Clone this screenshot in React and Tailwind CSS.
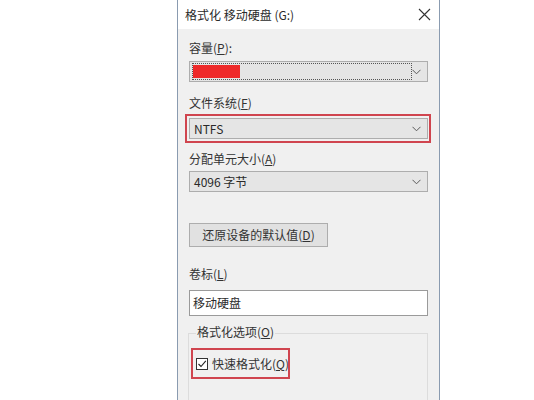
import React from "react";

const font = { fontFamily: '"Noto Sans CJK SC", "Noto Sans", sans-serif' };

function Chevron() {
  return (
    <svg width="9" height="6" viewBox="0 0 9 6" className="shrink-0">
      <path d="M0.5 0.8 L4.5 4.8 L8.5 0.8" fill="none" stroke="#5a5a5a" strokeWidth="1" />
    </svg>
  );
}

function Combo({ children, className = "" }) {
  return (
    <div className={"h-[21px] w-[239px] flex items-center justify-between bg-[#e5e5e5] border border-[#adadad] pl-[4px] pr-[6px] " + className}>
      <div className="flex-1 flex items-center text-[12px] leading-[16px] text-[#2a2a2a]">{children}</div>
      <Chevron />
    </div>
  );
}

export default function App() {
  return (
    <div className="w-[534px] h-[400px] bg-white overflow-hidden" style={font}>
      <div className="ml-[177px] w-[263px] h-[400px] border-x border-[#8a9bb0] bg-[#f0f0f0] flex flex-col overflow-hidden">
        <div className="h-[29px] shrink-0 bg-white flex items-center justify-between pl-[7px] pr-[8px]">
          <span className="text-[12px] leading-[16px] text-[#2a2a2a]">格式化 移动硬盘 (G:)</span>
          <svg width="13" height="13" viewBox="0 0 13 13">
            <path d="M1 1 L12 12 M12 1 L1 12" stroke="#333" strokeWidth="1.1" />
          </svg>
        </div>
        <div className="pl-[11px] flex flex-col shrink-0">
          <div className="mt-[11px] h-[16px] text-[12px] leading-[16px] text-[#333]">
            容量(<span className="underline">P</span>):
          </div>
          <Combo className="mt-[5px]">
            <div className="h-[17px] w-[220px] border border-dotted border-[#555] flex items-center -ml-[2px]">
              <div className="h-[13px] w-[47px] bg-[#ee2a2a]" />
            </div>
          </Combo>
          <div className="mt-[13px] h-[16px] text-[12px] leading-[16px] text-[#333]">
            文件系统(<span className="underline">F</span>)
          </div>
          <div className="relative mt-[7px]">
            <Combo>NTFS</Combo>
            <div className="absolute -left-[4px] -top-[4px] w-[246px] h-[29px] border-[2.5px] border-[#d0454f]" />
          </div>
          <div className="mt-[12px] h-[16px] text-[12px] leading-[16px] text-[#333]">
            分配单元大小(<span className="underline">A</span>)
          </div>
          <Combo className="mt-[4px]">4096 字节</Combo>
          <div className="mt-[31px] h-[24px] w-[139px] bg-[#e1e1e1] border border-[#adadad] flex items-center justify-center text-[12px] leading-[16px] text-[#333]">
            还原设备的默认值(<span className="underline">D</span>)
          </div>
          <div className="mt-[19px] h-[16px] text-[12px] leading-[16px] text-[#333]">
            卷标(<span className="underline">L</span>)
          </div>
          <div className="mt-[8px] h-[26px] w-[239px] bg-white border border-[#9a9a9a] flex items-center pl-[3px] text-[12px] leading-[16px] text-[#2a2a2a]">
            移动硬盘
          </div>
          <div className="relative w-[240px] h-[80px] border border-[#dcdcdc] -ml-[1px] mt-[17px]">
            <div className="absolute -top-[10px] left-[7px] px-[1px] bg-[#f0f0f0] text-[12px] leading-[16px] text-[#333]">
              格式化选项(<span className="underline">O</span>)
            </div>
            <div className="relative mt-[22px] ml-[7px] flex items-center gap-[4px] h-[16px]">
              <div className="w-[12px] h-[12px] bg-white border border-[#333] flex items-center justify-center">
                <svg width="10" height="10" viewBox="0 0 10 10">
                  <path d="M1.5 5 L4 7.5 L8.8 1.8" fill="none" stroke="#222" strokeWidth="1.1" />
                </svg>
              </div>
              <span className="text-[12px] leading-[16px] text-[#333]">
                快速格式化(<span className="underline">Q</span>)
              </span>
              <div className="absolute -left-[5px] -top-[8px] w-[99px] h-[31px] border-[2.5px] border-[#d0454f]" />
            </div>
          </div>
        </div>
      </div>
    </div>
  );
}
